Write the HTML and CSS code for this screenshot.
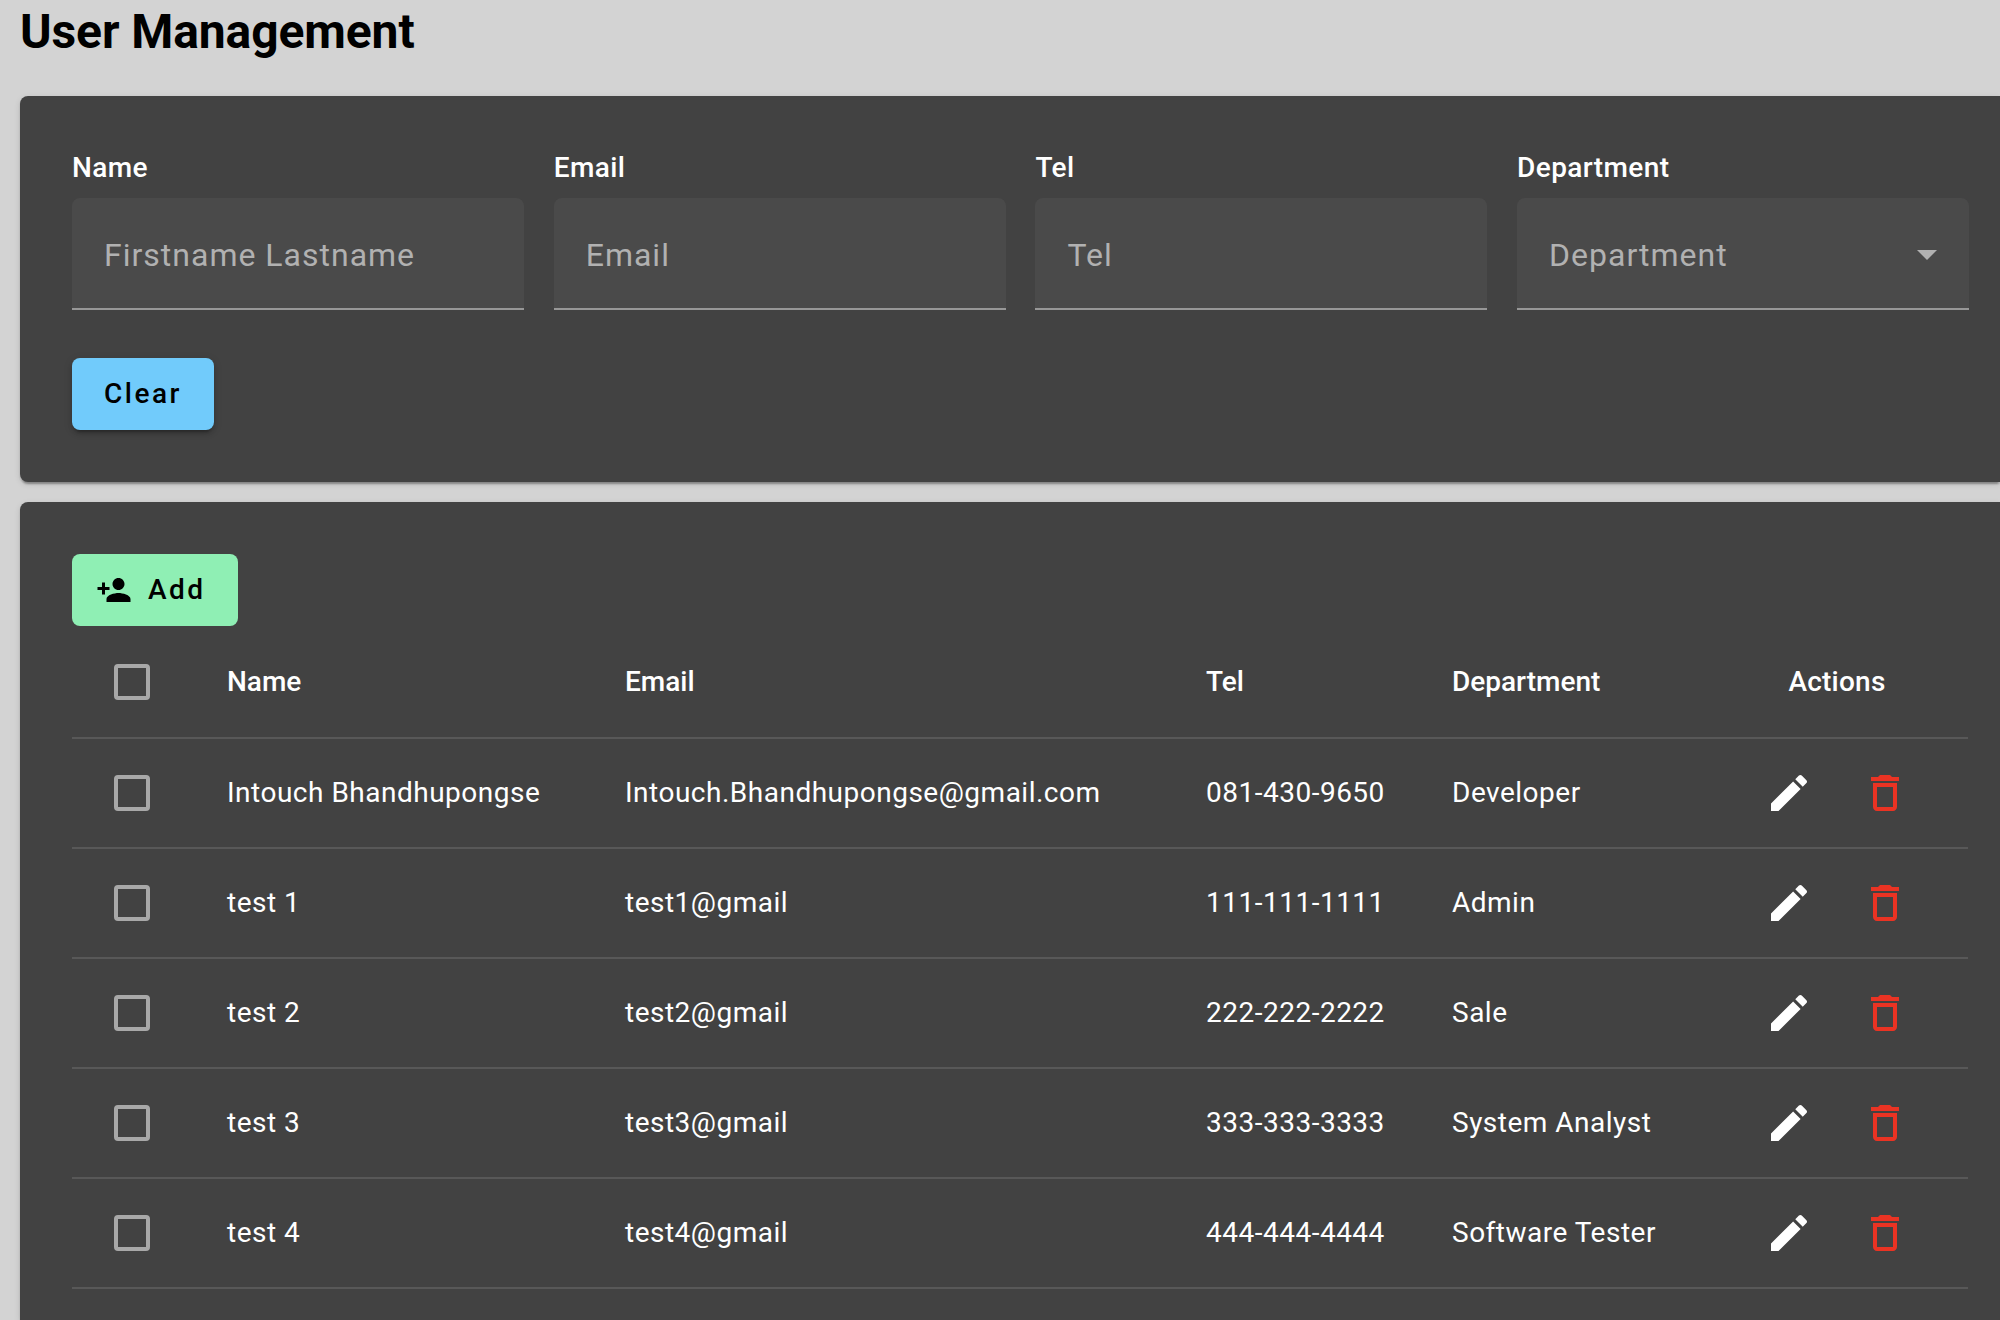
FILE: index.html
```html
<!DOCTYPE html>
<html lang="en">
<head>
<meta charset="utf-8">
<title>User Management</title>
<link rel="stylesheet" href="styles.css">
</head>
<body>
<svg class="sprite" aria-hidden="true">
  <symbol id="edit" viewBox="0 0 24 24"><path d="M3 17.25V21h3.75L17.81 9.94l-3.75-3.75L3 17.25zM20.71 7.04c.39-.39.39-1.02 0-1.41l-2.34-2.34c-.39-.39-1.02-.39-1.41 0l-1.83 1.83 3.75 3.75 1.83-1.83z"/></symbol>
  <symbol id="delete" viewBox="0 0 24 24"><path d="M6 19c0 1.1.9 2 2 2h8c1.1 0 2-.9 2-2V7H6v12zM8 9h8v10H8V9zm7.5-5l-1-1h-5l-1 1H5v2h14V4h-3.5z"/></symbol>
  <symbol id="person-add" viewBox="0 0 24 24"><path d="M15 12c2.21 0 4-1.79 4-4s-1.79-4-4-4-4 1.79-4 4 1.79 4 4 4zm-9-2V7H4v3H1v2h3v3h2v-3h3v-2H6zm9 4c-2.67 0-8 1.34-8 4v2h16v-2c0-2.66-5.33-4-8-4z"/></symbol>
</svg>
<main class="page">
  <h1 class="title">User Management</h1>

  <section class="card filter">
    <div class="fields">
      <div class="field"><span class="label">Name</span><div class="input">Firstname Lastname</div></div>
      <div class="field"><span class="label">Email</span><div class="input">Email</div></div>
      <div class="field"><span class="label">Tel</span><div class="input">Tel</div></div>
      <div class="field"><span class="label">Department</span><div class="input">Department<i class="arrow"></i></div></div>
    </div>
    <button class="btn btn-clear">Clear</button>
  </section>

  <section class="card users">
    <button class="btn btn-add"><svg class="btn-icon"><use href="#person-add"/></svg>Add</button>
    <div class="table">
      <div class="row head"><div class="check"><i class="box"></i></div><div class="cell">Name</div><div class="cell">Email</div><div class="cell">Tel</div><div class="cell">Department</div><div class="cell actions">Actions</div></div>
      <div class="row"><div class="check"><i class="box"></i></div><div class="cell">Intouch Bhandhupongse</div><div class="cell">Intouch.Bhandhupongse@gmail.com</div><div class="cell">081-430-9650</div><div class="cell">Developer</div><div class="actions"><svg class="icon"><use href="#edit"/></svg><svg class="icon warn"><use href="#delete"/></svg></div></div>
      <div class="row"><div class="check"><i class="box"></i></div><div class="cell">test 1</div><div class="cell">test1@gmail</div><div class="cell">111-111-1111</div><div class="cell">Admin</div><div class="actions"><svg class="icon"><use href="#edit"/></svg><svg class="icon warn"><use href="#delete"/></svg></div></div>
      <div class="row"><div class="check"><i class="box"></i></div><div class="cell">test 2</div><div class="cell">test2@gmail</div><div class="cell">222-222-2222</div><div class="cell">Sale</div><div class="actions"><svg class="icon"><use href="#edit"/></svg><svg class="icon warn"><use href="#delete"/></svg></div></div>
      <div class="row"><div class="check"><i class="box"></i></div><div class="cell">test 3</div><div class="cell">test3@gmail</div><div class="cell">333-333-3333</div><div class="cell">System Analyst</div><div class="actions"><svg class="icon"><use href="#edit"/></svg><svg class="icon warn"><use href="#delete"/></svg></div></div>
      <div class="row"><div class="check"><i class="box"></i></div><div class="cell">test 4</div><div class="cell">test4@gmail</div><div class="cell">444-444-4444</div><div class="cell">Software Tester</div><div class="actions"><svg class="icon"><use href="#edit"/></svg><svg class="icon warn"><use href="#delete"/></svg></div></div>
    </div>
  </section>
</main>
</body>
</html>
```
FILE: styles.css
```css
* { box-sizing: border-box; }

body {
  margin: 0;
  height: 1320px;
  overflow: hidden;
  background: #d3d3d3;
  color: #fff;
  font-family: Roboto, "Liberation Sans", sans-serif;
  font-size: 28px;
}

.sprite { display: none; }

.page {
  display: flex;
  flex-direction: column;
  height: 1320px;
  padding-left: 20px;
}

.title {
  margin: 0 0 32px;
  color: #000;
  font-size: 48px;
  line-height: 64px;
  font-weight: 700;
  letter-spacing: -0.1px;
}

.card {
  padding: 52px 0 52px 52px;
  border-radius: 8px 0 0 8px;
  background: #424242;
  box-shadow: 0 4px 2px -2px rgba(0, 0, 0, .2), 0 2px 2px rgba(0, 0, 0, .14), 0 2px 6px rgba(0, 0, 0, .12);
}

.filter { margin-bottom: 20px; }

.users {
  flex: 1;
  padding-bottom: 0;
  border-radius: 8px 0 0 0;
}

.fields {
  display: flex;
  gap: 29.7px;
  margin-bottom: 48px;
}

.field {
  flex: 0 0 452px;
  display: flex;
  flex-direction: column;
  gap: 10px;
}

.label {
  line-height: 40px;
  font-weight: 500;
  letter-spacing: .4px;
}

.input {
  display: flex;
  align-items: center;
  justify-content: space-between;
  height: 112px;
  padding: 3px 32px 0;
  border-bottom: 2px solid #979797;
  border-radius: 8px 8px 0 0;
  background: #4a4a4a;
  color: #b1b1b1;
  font-size: 32px;
  letter-spacing: 1px;
}

.arrow {
  border: 10px solid transparent;
  border-top-color: #b1b1b1;
  border-bottom: 0;
}

.btn {
  display: flex;
  align-items: center;
  height: 72px;
  padding: 0 32px 2px;
  border: 0;
  border-radius: 8px;
  color: #000;
  font: 500 28px Roboto, "Liberation Sans", sans-serif;
  letter-spacing: 2.5px;
}

.btn-clear {
  background: #71cbfb;
  box-shadow: 0 6px 2px -4px rgba(0, 0, 0, .2), 0 4px 4px rgba(0, 0, 0, .14), 0 2px 10px rgba(0, 0, 0, .12);
}

.btn-add {
  padding-left: 24px;
  background: #8fefb4;
}

.btn-icon {
  width: 36px;
  height: 36px;
  margin: 2px 16px 0 0;
}

.table {
  width: 1896px;
  padding-top: 1px;
}

.row {
  display: grid;
  grid-template-columns: 155px 398px 581px 246px 289px 192px;
  align-items: center;
  height: 110px;
  border-bottom: 2px solid #585858;
  letter-spacing: .5px;
}

.head {
  height: 112px;
  font-weight: 500;
  letter-spacing: 0;
}

.cell { padding-bottom: 2px; }

.check { padding-left: 42px; }

.box {
  display: block;
  width: 36px;
  height: 36px;
  border: 4px solid #a8a8a8;
  border-radius: 4px;
}

.actions {
  display: flex;
  justify-content: center;
  gap: 48px;
}

.head .actions { letter-spacing: .22px; }

.icon {
  width: 48px;
  height: 48px;
  fill: #fff;
}

.warn { fill: #ea3323; }
```
